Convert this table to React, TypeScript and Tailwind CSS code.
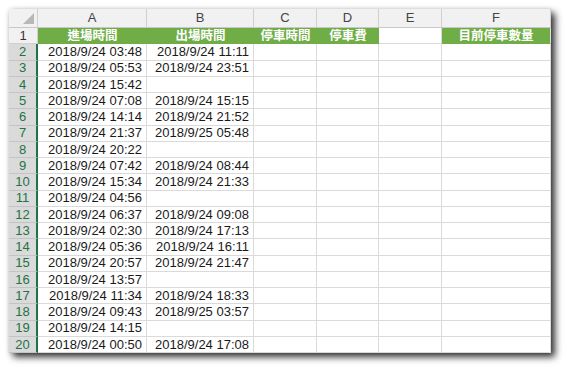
import React from 'react';

const cols = [
  { key: 'A', w: 'w-[109px]' },
  { key: 'B', w: 'w-[107px]' },
  { key: 'C', w: 'w-[63px]' },
  { key: 'D', w: 'w-[62px]' },
  { key: 'E', w: 'w-[63px]' },
  { key: 'F', w: 'w-[109px]' },
];

const headers = ['進場時間', '出場時間', '停車時間', '停車費', '', '目前停車數量'];

const rows: [string, string][] = [
  ['2018/9/24 03:48', '2018/9/24 11:11'],
  ['2018/9/24 05:53', '2018/9/24 23:51'],
  ['2018/9/24 15:42', ''],
  ['2018/9/24 07:08', '2018/9/24 15:15'],
  ['2018/9/24 14:14', '2018/9/24 21:52'],
  ['2018/9/24 21:37', '2018/9/25 05:48'],
  ['2018/9/24 20:22', ''],
  ['2018/9/24 07:42', '2018/9/24 08:44'],
  ['2018/9/24 15:34', '2018/9/24 21:33'],
  ['2018/9/24 04:56', ''],
  ['2018/9/24 06:37', '2018/9/24 09:08'],
  ['2018/9/24 02:30', '2018/9/24 17:13'],
  ['2018/9/24 05:36', '2018/9/24 16:11'],
  ['2018/9/24 20:57', '2018/9/24 21:47'],
  ['2018/9/24 13:57', ''],
  ['2018/9/24 11:34', '2018/9/24 18:33'],
  ['2018/9/24 09:43', '2018/9/25 03:57'],
  ['2018/9/24 14:15', ''],
  ['2018/9/24 00:50', '2018/9/24 17:08'],
];

const latin = { fontFamily: '"Liberation Sans", Arial, sans-serif' };
const cjk = { fontFamily: '"Noto Sans CJK TC", "Noto Sans CJK SC", sans-serif' };

export default function App() {
  return (
    <div className="w-[567px] h-[369px] bg-white pl-[9px] pt-[9px] overflow-hidden">
      <div
        className="w-[542px] h-[344px] bg-white flex flex-col shadow-[4px_4px_7px_rgba(0,0,0,0.8),0_0_4px_rgba(0,0,0,0.12)]"
        style={latin}
      >
        {/* column letters */}
        <div className="flex h-[19px] bg-[#f1f1f1] border-b border-[#c8c8c8]">
          <div className="w-[29px] relative border-r border-[#d0d0d0]">
            <div className="absolute right-[3px] bottom-[3px] w-0 h-0 border-l-[11px] border-l-transparent border-b-[11px] border-b-[#b8b8b8]" />
          </div>
          {cols.map((c) => (
            <div
              key={c.key}
              className={`${c.w} flex items-center justify-center text-[13px] text-[#444] border-r border-[#d0d0d0]`}
            >
              {c.key}
            </div>
          ))}
        </div>

        {/* row 1 headers */}
        <div className="flex h-[16.25px]">
          <div className="w-[29px] flex items-center justify-center bg-[#f1f1f1] text-[13px] text-[#333] border-r border-b border-[#d0d0d0]">
            1
          </div>
          {cols.map((c, i) => (
            <div
              key={c.key}
              className={`${c.w} flex items-center justify-center text-[12.5px] font-semibold leading-none text-white ${
                headers[i] || c.key === 'F'
                  ? 'bg-[#70ad47] border-b border-[#70ad47]'
                  : 'bg-white border-r border-b border-[#dadada]'
              } ${c.key === 'F' ? 'border-r border-r-[#e0e0e0]' : ''}`}
              style={cjk}
            >
              {headers[i]}
            </div>
          ))}
        </div>

        {/* data rows */}
        {rows.map((r, idx) => (
          <div key={idx} className="flex h-[16.25px]">
            <div className="w-[29px] flex items-center justify-center bg-[#dadada] text-[13px] text-[#217346] border-r-2 border-r-[#217346] border-b border-b-[#c4c4c4]">
              {idx + 2}
            </div>
            {cols.map((c, i) => (
              <div
                key={c.key}
                className={`${c.w} flex items-center justify-end pr-[4px] text-[13px] text-[#1a1a1a] border-r border-b border-[#dadada]`}
              >
                {i < 2 ? r[i] : ''}
              </div>
            ))}
          </div>
        ))}
      </div>
    </div>
  );
}
